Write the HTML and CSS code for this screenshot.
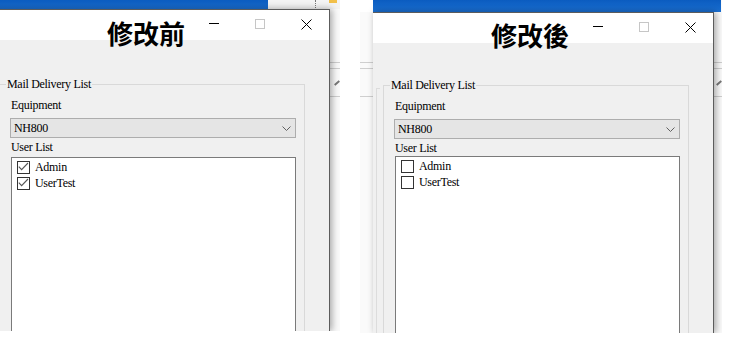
FILE: index.html
```html
<!DOCTYPE html>
<html>
<head>
<meta charset="utf-8">
<title>Mail Delivery List</title>
<link rel="stylesheet" href="styles.css">
</head>
<body>
<div class="page">
  <div class="shot shot-before">
    <div class="desk">
      <div class="desk-title">
        <div class="desk-blue"></div>
        <div class="desk-rest"><span class="dots"></span><span class="folder"></span></div>
      </div>
      <div class="desk-body">
        <div class="rule"></div>
        <div class="rule r2"></div>
        <div class="pencil"></div>
        <div class="rule r3"></div>
      </div>
    </div>
    <div class="dialog">
      <div class="titlebar">
        <div class="caption" lang="zh-Hant">修改前</div>
        <div class="winbtn"><svg width="10" height="10" viewBox="0 0 10 10"><path d="M0 4.5h10" stroke="#000" stroke-width="1"/></svg></div>
        <div class="winbtn"><svg width="10" height="10" viewBox="0 0 10 10"><rect x="0.5" y="0.5" width="9" height="9" fill="none" stroke="#c6c6c6"/></svg></div>
        <div class="winbtn"><svg width="11" height="11" viewBox="0 0 11 11"><path d="M0.5 0.5L10.5 10.5M10.5 0.5L0.5 10.5" stroke="#000" stroke-width="1"/></svg></div>
      </div>
      <div class="client">
        <fieldset class="group">
          <legend>Mail Delivery List</legend>
          <div class="label">Equipment</div>
          <div class="combo"><span>NH800</span><svg width="9" height="5" viewBox="0 0 9 5"><path d="M0.5 0.5L4.5 4.5L8.5 0.5" fill="none" stroke="#606060"/></svg></div>
          <div class="label label-list">User List</div>
          <div class="listbox">
            <div class="item"><span class="check"><svg width="11" height="11" viewBox="0 0 11 11"><path d="M0.8 4.6L3.6 7.6L10 1" fill="none" stroke="#555" stroke-width="1.1"/></svg></span>Admin</div>
            <div class="item"><span class="check"><svg width="11" height="11" viewBox="0 0 11 11"><path d="M0.8 4.6L3.6 7.6L10 1" fill="none" stroke="#555" stroke-width="1.1"/></svg></span>UserTest</div>
          </div>
        </fieldset>
      </div>
    </div>
  </div>

  <div class="shot shot-after">
    <div class="desk">
      <div class="desk-title">
        <div class="desk-white"></div>
        <div class="desk-blue"></div>
      </div>
      <div class="desk-body">
        <div class="rule"></div>
        <div class="rule r2"></div>
        <div class="pencil"></div>
        <div class="rule r3"></div>
      </div>
    </div>
    <div class="dialog">
      <div class="titlebar">
        <div class="caption" lang="zh-Hant">修改後</div>
        <div class="winbtn"><svg width="10" height="10" viewBox="0 0 10 10"><path d="M0 4.5h10" stroke="#000" stroke-width="1"/></svg></div>
        <div class="winbtn"><svg width="10" height="10" viewBox="0 0 10 10"><rect x="0.5" y="0.5" width="9" height="9" fill="none" stroke="#c6c6c6"/></svg></div>
        <div class="winbtn"><svg width="11" height="11" viewBox="0 0 11 11"><path d="M0.5 0.5L10.5 10.5M10.5 0.5L0.5 10.5" stroke="#000" stroke-width="1"/></svg></div>
      </div>
      <div class="client">
        <fieldset class="group">
          <legend>Mail Delivery List</legend>
          <div class="label">Equipment</div>
          <div class="combo"><span>NH800</span><svg width="9" height="5" viewBox="0 0 9 5"><path d="M0.5 0.5L4.5 4.5L8.5 0.5" fill="none" stroke="#606060"/></svg></div>
          <div class="label label-list">User List</div>
          <div class="listbox">
            <div class="item"><span class="check"></span>Admin</div>
            <div class="item"><span class="check"></span>UserTest</div>
          </div>
        </fieldset>
      </div>
    </div>
  </div>
</div>
</body>
</html>
```

FILE: styles.css
```css
* { box-sizing: border-box; }
html, body { margin: 0; background: #fff; }
body {
  width: 756px;
  height: 347px;
  overflow: hidden;
  font-family: "Liberation Serif", "Times New Roman", serif;
  font-size: 12px;
  letter-spacing: -0.3px;
  color: #000;
}
.page { display: flex; align-items: flex-start; }

.shot { position: relative; overflow: hidden; flex: none; }
.shot-before { width: 340px; height: 331px; --title-h: 9px; --desk-pad: 53px; }
.shot-after { width: 362px; height: 333px; margin-left: 20px; --title-h: 12px; --desk-pad: 50px; }

/* background window behind the dialog */
.desk { position: absolute; inset: 0; display: flex; flex-direction: column; background: #fafafa; }
.desk-title { height: var(--title-h); display: flex; flex: none; }
.desk-blue { background: linear-gradient(#0b5cc0, #1a6fd2); }
.shot-before .desk-blue { width: 268px; }
.shot-after .desk-blue { width: 348px; }
.desk-white { width: 13px; background: #fff; }
.desk-rest { flex: 1; background: #f4f4f4; position: relative; }
.dots { position: absolute; left: 47px; top: 0; width: 1px; height: 8px; border-left: 1px dotted #777; }
.folder { position: absolute; left: 61px; top: 0; width: 8px; height: 3px; background: #f2c04a; }
.desk-body { flex: 1; padding-top: var(--desk-pad); }
.rule { height: 1px; background: #cfcfcf; }
.rule.r2 { margin-top: 5px; }
.pencil { width: 6px; height: 2px; margin: 13px 0 0 auto; background: #777; transform: rotate(-40deg); }
.rule.r3 { margin-top: 12px; }

/* dialog window */
.dialog {
  position: absolute;
  bottom: 0;
  display: flex;
  flex-direction: column;
  background: #f0f0f0;
  border-top: 1px solid #5c5c5c;
  border-right: 1px solid #5c5c5c;
  box-shadow: 2px 0 7px rgba(0, 0, 0, 0.35);
}
.shot-before .dialog { left: -11px; top: 9px; width: 341px; }
.shot-after .dialog { left: 13px; top: 12px; width: 341px; }

.titlebar {
  position: relative;
  height: 30px;
  flex: none;
  background: #fff;
  display: flex;
  justify-content: flex-end;
}
.caption {
  position: absolute;
  left: 118px;
  top: 10px;
  font-family: "Noto Sans CJK TC", "Noto Sans CJK SC", sans-serif;
  font-weight: 700;
  font-size: 26px;
  line-height: 26px;
  letter-spacing: 0;
  color: #000;
  white-space: nowrap;
}
.shot-after .caption { top: 9px; }
.winbtn {
  width: 46px;
  height: 30px;
  display: flex;
  justify-content: center;
  padding-top: 9px;
}
.winbtn svg { display: block; }

.client { flex: 1; padding-top: 37px; position: relative; }
.shot-after .client { padding-top: 35px; }
/* inner panel edge left of the group box (only visible in the right capture) */
.client::before {
  content: "";
  position: absolute;
  left: 3px;
  top: 45px;
  bottom: 0;
  border-left: 1px solid #dcdcdc;
  border-top: 1px solid #dcdcdc;
  width: 3px;
}

.group {
  margin: 0 24px 0 10px;
  padding: 0;
  border: 1px solid #d9d9d9;
  min-width: 0;
  height: 400px;
}
.group legend {
  margin-left: 6px;
  padding: 0 1px;
  line-height: 14px;
}
.label {
  margin: 7px 0 0 11px;
  line-height: 14px;
  height: 14px;
}
.label-list { margin-top: 2px; }

.combo {
  margin: 6px 8px 0 10px;
  height: 20px;
  background: #e5e5e5;
  border: 1px solid #adadad;
  display: flex;
  align-items: center;
  justify-content: space-between;
  padding: 0 4px 0 3px;
  line-height: 14px;
}
.combo svg { display: block; }

.listbox {
  margin: 3px 8px 0 11px;
  height: 300px;
  background: #fff;
  border: 1px solid #7a7a7a;
  padding-top: 1px;
}
.shot-after .listbox { margin-top: 1px; }
.item {
  height: 16px;
  display: flex;
  align-items: center;
  padding-left: 5px;
  line-height: 14px;
}
.check {
  width: 13px;
  height: 13px;
  border: 1px solid #333;
  background: #fff;
  margin-right: 5px;
  flex: none;
  display: flex;
  align-items: center;
  justify-content: center;
}
.check svg { display: block; }
```
